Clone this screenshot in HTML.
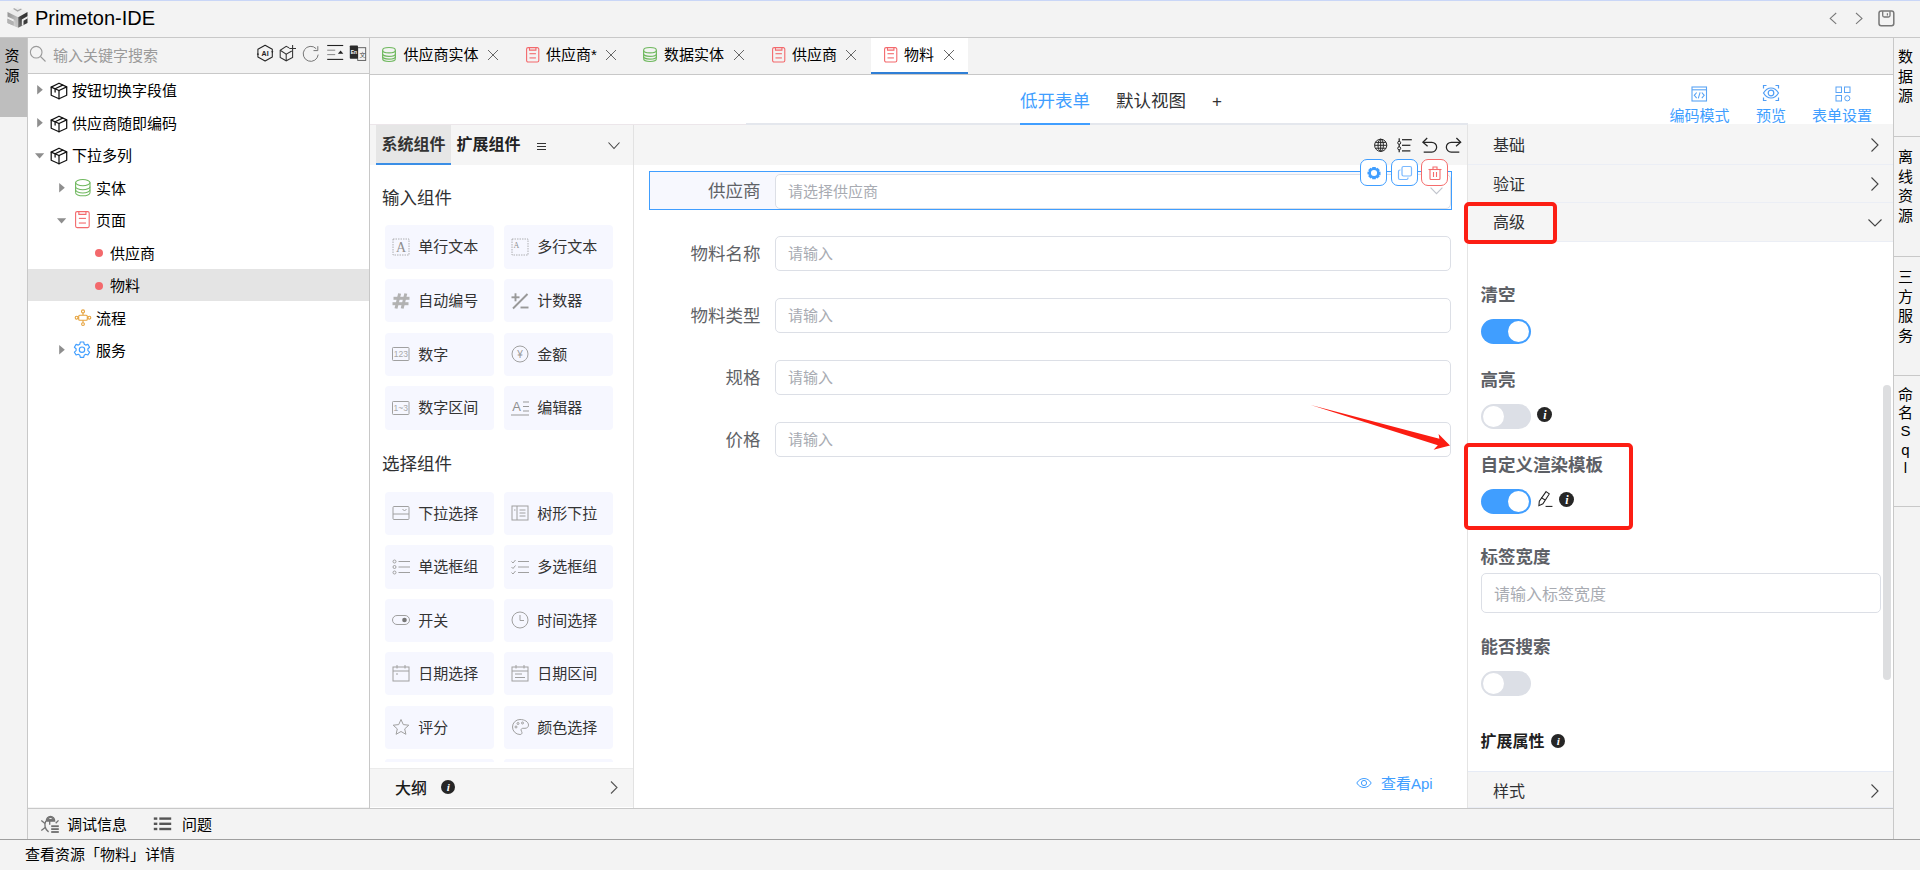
<!DOCTYPE html>
<html lang="zh-CN"><head><meta charset="utf-8"><title>Primeton-IDE</title>
<style>
*{box-sizing:border-box;margin:0;padding:0}
html,body{width:1920px;height:870px;overflow:hidden;background:#f3f3f3}
body{position:relative;font-family:"Liberation Sans", "Noto Sans CJK SC", sans-serif;font-size:15px;color:#000;line-height:1}
.a{position:absolute}
.t{position:absolute;white-space:nowrap;line-height:20px;height:20px}
.ln{position:absolute;background:#c8c8c8}
svg{position:absolute;overflow:visible}
.t15{font-size:15px}
.t17{font-size:17.5px}
.b{font-weight:bold}
.blue{color:#409eff}
.ph{color:#a8abb2}
.lbl{color:#606266}
.inp{position:absolute;background:#fff;border:1px solid #dcdfe6;border-radius:5px}
.ci{position:absolute;background:#f6f7ff;border-radius:4px;width:109px;height:43px}
.ci .t{left:33.300px;top:11.700px;color:#333;font-size:15px}
.ch{position:absolute;left:1468px;width:425px;background:#f5f5f5;border-bottom:1px solid #ebeef5}
.ch .t{left:25px;font-size:16px;color:#303133}
.sw{position:absolute;width:50px;height:25px;border-radius:13px}
.sw i{position:absolute;top:2px;width:21px;height:21px;border-radius:50%;background:#fff}
.on{background:#409eff}.on i{left:27px}
.off{background:#dcdfe6}.off i{left:2px}
.red{position:absolute;border:4px solid #fc1e14;border-radius:5px}
.vt{position:absolute;left:1892px;width:27px;text-align:center;font-size:15px;line-height:19.5px;color:#000}
</style></head>
<body>
<div class="a" style="left:0;top:0;width:1920px;height:1px;background:#c9d6f7"></div>
<div class="ln" style="left:0;top:37px;width:1920px;height:1px"></div>
<svg style="left:7px;top:7px" width="21" height="21" viewBox="0 0 20 21">
<defs><linearGradient id="lgl" x1="0" y1="0" x2="1" y2="0.6"><stop offset="0" stop-color="#929292"/><stop offset="1" stop-color="#c4c4c4"/></linearGradient><linearGradient id="lgr" x1="0" y1="0.600" x2="1" y2="0"><stop offset="0" stop-color="#6a6a6a"/><stop offset="0.35" stop-color="#3e3e3e"/><stop offset="1" stop-color="#2e2e2e"/></linearGradient></defs>
<polygon points="10.100,0 20,5.060 10.620,10.370 0,5.060" fill="#ececec"/>
<polyline points="6.100,1.500 10.100,3.900 13.900,2" stroke="#a8a8a8" stroke-width="1.300" fill="none"/>
<polygon points="0,5.060 10.700,10.370 10.700,20.700 0,15.900" fill="url(#lgl)"/>
<polygon points="-0.300,9.500 6.400,12.600 6.400,14.700 -0.300,11.600" fill="#f0f0f0"/>
<polygon points="0,11.900 5.900,14.700 5.900,18.600 0,15.900" fill="#b2b2b2"/>
<polygon points="6.300,12.700 8,13.500 8,19.500 6.300,18.800" fill="#cdcdcd"/>
<polygon points="10.700,10.370 20,5.060 20,15.900 10.700,20.700" fill="url(#lgr)"/>
<polygon points="14.300,12.400 20.300,9 20.300,11.300 16,13.700 16,18 14.300,19" fill="#ededed"/>
</svg>
<div class="t" style="left:35px;top:5.500px;font-size:20px;line-height:24px;height:24px;color:#000">Primeton-IDE</div>
<svg style="left:1820px;top:4px" width="90" height="30" viewBox="1820 4 90 30" fill="none" stroke="#777" stroke-width="1.050">
<polyline points="1836.200,13 1830.200,18.400 1836.200,23.800"/>
<polyline points="1856,13 1862,18.400 1856,23.800"/>
<rect x="1879" y="11" width="14.800" height="14.800" rx="2.200" stroke-width="1.500"/>
<path d="M1882.700 11.200v4.300a1.500 1.500 0 0 0 1.500 1.500h4.300a1.500 1.500 0 0 0 1.500-1.500V11.200" stroke-width="1.300"/>
<line x1="1887.400" y1="13.300" x2="1887.400" y2="15.400" stroke-width="1.200"/>
</svg>
<div class="a" style="left:0;top:38px;width:27px;height:79px;background:#bebebe"></div>
<div class="ln" style="left:27px;top:38px;width:1px;height:802px"></div>
<div class="a" style="left:0;top:46px;width:24px;text-align:center;font-size:15px;line-height:20px">资<br>源</div>
<div class="a" style="left:28px;top:74px;width:341px;height:733px;background:#fff"></div>
<div class="ln" style="left:28px;top:73px;width:341px;height:1px"></div>
<div class="ln" style="left:369px;top:38px;width:1px;height:770px"></div>
<svg style="left:29px;top:45px" width="18" height="18" viewBox="0 0 18 18" fill="none" stroke="#9a9a9a" stroke-width="1.1"><circle cx="7.2" cy="7.2" r="5.8"/><line x1="11.5" y1="11.5" x2="16.5" y2="16.5"/></svg>
<div class="t t15" style="left:53px;top:46px;color:#9a9a9a">输入关键字搜索</div>
<svg style="left:250px;top:38px" width="124" height="36" viewBox="250 38 124 36" fill="none" stroke="#222" stroke-width="1.05">
<polygon points="265.1,45.2 272.3,49.2 272.3,57 265.1,61 257.9,57 257.9,49.2" stroke-linejoin="round"/>
<polygon points="271.2,51.2 273.4,51.2 272.3,53.2" fill="#222" stroke="none"/><polygon points="256.8,54.8 259,54.8 257.9,52.8" fill="#222" stroke="none"/>
<text x="265.1" y="55.6" font-size="7" font-weight="bold" text-anchor="middle" fill="#222" stroke="none" font-family="Liberation Sans, sans-serif">AI</text>
<g stroke="#333"><polyline points="289.2,47.9 286.2,46.4 280.2,50.2 280.2,57.4 286.2,60.8 292.6,57.4 292.6,45"/><polyline points="280.2,50.2 286.2,54.1 291.8,51"/><line x1="286.2" y1="54.1" x2="286.2" y2="60.8"/><line x1="289.3" y1="48.5" x2="296" y2="48.5"/></g>
<g stroke="#777" stroke-width="1"><path d="M318.2 54.6A7.500 7.500 0 1 1 316.2 48.7"/><polyline points="317.8,46.2 317.8,50.6 313.5,50.6"/></g>
<g><line x1="327.2" y1="45.5" x2="343.2" y2="45.5" stroke-width="1.1"/><line x1="327.2" y1="59.4" x2="343.2" y2="59.4" stroke-width="1.1"/><line x1="327.2" y1="50.200" x2="335.2" y2="50.200" stroke="#8a8a8a"/><line x1="327.2" y1="54.600" x2="335.2" y2="54.600" stroke="#8a8a8a"/><polygon points="340.6,50.400 343.3,53.700 337.900,53.700" fill="#222" stroke="none"/></g>
<g><rect x="357.700" y="47.700" width="8" height="12.700" stroke="#555" stroke-width="0.9" fill="#f3f3f3"/><text x="362.6" y="57.300" font-size="6" text-anchor="middle" fill="#444" stroke="none" font-family="Noto Sans CJK SC, sans-serif">文</text><rect x="349.800" y="45.400" width="8.200" height="13.300" rx="0.8" fill="#2b2b2b" stroke="none"/><text x="353.900" y="54.300" font-size="5" font-weight="bold" text-anchor="middle" fill="#fff" stroke="none" font-family="Liberation Sans, sans-serif">En</text></g>
</svg>
<div class="a" style="left:28px;top:269px;width:341px;height:32px;background:#e4e4e4"></div>
<svg style="left:37px;top:85.1px" width="6" height="9.4"><polygon points="0.2,0 5.8,4.7 0.2,9.4" fill="#8e8e8e"/></svg>
<svg style="left:50px;top:82.0px" width="18" height="18" viewBox="-9 -9 18 18" fill="none" stroke="#111" stroke-width="1.25" stroke-linejoin="round" stroke-linecap="round"><polygon points="0,-7.800 7.700,-4.100 7.700,4.300 0,7.800 -7.800,4.300 -7.800,-3.900"/><polyline points="-7.800,-3.900 0,-0.500 7.700,-4.100"/><line x1="0" y1="-0.500" x2="0" y2="7.800"/><polyline points="3.700,-5.900 -3.900,-2.300 -3.900,1"/></svg>
<div class="t " style="left:72px;top:81.0px;">按钮切换字段值</div>
<svg style="left:37px;top:117.6px" width="6" height="9.4"><polygon points="0.2,0 5.8,4.7 0.2,9.4" fill="#8e8e8e"/></svg>
<svg style="left:50px;top:114.5px" width="18" height="18" viewBox="-9 -9 18 18" fill="none" stroke="#111" stroke-width="1.25" stroke-linejoin="round" stroke-linecap="round"><polygon points="0,-7.800 7.700,-4.100 7.700,4.300 0,7.800 -7.800,4.300 -7.800,-3.900"/><polyline points="-7.800,-3.900 0,-0.500 7.700,-4.100"/><line x1="0" y1="-0.500" x2="0" y2="7.800"/><polyline points="3.700,-5.900 -3.900,-2.300 -3.900,1"/></svg>
<div class="t " style="left:72px;top:113.5px;">供应商随即编码</div>
<svg style="left:35.2px;top:152.9px" width="9.2" height="5.4"><polygon points="0,0.2 9.2,0.2 4.6,5.4" fill="#8e8e8e"/></svg>
<svg style="left:50px;top:147.0px" width="18" height="18" viewBox="-9 -9 18 18" fill="none" stroke="#111" stroke-width="1.25" stroke-linejoin="round" stroke-linecap="round"><polygon points="0,-7.800 7.700,-4.100 7.700,4.300 0,7.800 -7.800,4.300 -7.800,-3.900"/><polyline points="-7.800,-3.900 0,-0.500 7.700,-4.100"/><line x1="0" y1="-0.500" x2="0" y2="7.800"/><polyline points="3.700,-5.900 -3.900,-2.300 -3.900,1"/></svg>
<div class="t " style="left:72px;top:146.0px;">下拉多列</div>
<svg style="left:59.2px;top:183.0px" width="6" height="9.4"><polygon points="0.2,0 5.8,4.7 0.2,9.4" fill="#8e8e8e"/></svg>
<svg style="left:74.95px;top:178.85px" width="15.6" height="17.3" viewBox="-7.8 -8.65 15.6 17.3" fill="none" stroke="#6fb85e" stroke-width="1.1"><ellipse cx="0" cy="-5.04" rx="7.20" ry="3.11"/><line x1="-7.20" y1="-5.04" x2="-7.20" y2="5.04"/><line x1="7.20" y1="-5.04" x2="7.20" y2="5.04"/><path d="M-7.20 -1.01A7.20 3.11 0 0 0 7.20 -1.01"/><path d="M-7.20 2.22A7.20 3.11 0 0 0 7.20 2.22"/><path d="M-7.20 5.04A7.20 3.11 0 0 0 7.20 5.04"/></svg>
<div class="t " style="left:96px;top:178.5px;">实体</div>
<svg style="left:57.3px;top:217.9px" width="9.2" height="5.4"><polygon points="0,0.2 9.2,0.2 4.6,5.4" fill="#8e8e8e"/></svg>
<svg style="left:75.35px;top:211.0px" width="14.8" height="17.2" viewBox="-7.4 -8.6 14.8 17.2" fill="none" stroke="#f3696c" stroke-width="1.1"><rect x="-6.80" y="-8.00" width="13.60" height="16.00" rx="1.500"/><polyline points="-3.55,-8.00 -3.55,-5.25 3.55,-5.25 3.55,-8.00"/><line x1="-3.55" y1="-1.20" x2="3.55" y2="-1.20"/><line x1="-3.55" y1="3.44" x2="3.55" y2="3.44"/></svg>
<div class="t " style="left:96px;top:211.0px;">页面</div>
<div class="a" style="left:94.5px;top:249.3px;width:8px;height:8px;border-radius:50%;background:#f3696c"></div>
<div class="t " style="left:110px;top:243.5px;">供应商</div>
<div class="a" style="left:94.5px;top:281.8px;width:8px;height:8px;border-radius:50%;background:#f3696c"></div>
<div class="t " style="left:110px;top:276.0px;">物料</div>
<svg style="left:73.9px;top:309.2px" width="18" height="18" viewBox="-9 -9 18 18" fill="none" stroke="#e6a23c" stroke-width="1.1"><circle cx="0" cy="-6.6" r="1.5"/><line x1="0" y1="-5.100" x2="0" y2="-2.800"/><rect x="-4.300" y="-2.800" width="8.600" height="5" rx="1"/><circle cx="-6.400" cy="-0.300" r="1.400"/><circle cx="6.400" cy="-0.300" r="1.400"/><line x1="-5" y1="-0.300" x2="-4.300" y2="-0.300"/><line x1="5" y1="-0.300" x2="4.300" y2="-0.300"/><line x1="0" y1="2.200" x2="0" y2="4.700"/><circle cx="0" cy="6.100" r="1.400"/></svg>
<div class="t " style="left:96px;top:308.5px;">流程</div>
<svg style="left:59.2px;top:344.7px" width="6" height="9.4"><polygon points="0.2,0 5.8,4.7 0.2,9.4" fill="#8e8e8e"/></svg>
<svg style="left:73.4px;top:340.7px" width="18" height="18" viewBox="0 0 18 18" fill="none" stroke="#409eff" stroke-width="1.15" stroke-linejoin="round"><path d="M7.300 1h3.400l.5 2.200 1.500.9 2.200-.7 1.700 2.900-1.700 1.500v1.800l1.700 1.500-1.700 2.900-2.200-.7-1.500.9-.5 2.200H7.300l-.5-2.200-1.500-.9-2.200.7-1.700-2.900 1.700-1.500V7.800L1.400 6.300l1.700-2.900 2.200.7 1.500-.9z"/><circle cx="9" cy="8.700" r="2.700"/></svg>
<div class="t " style="left:96px;top:341.0px;">服务</div>
<div class="ln" style="left:370px;top:74px;width:1523px;height:1px"></div>
<div class="a" style="left:871px;top:38px;width:97px;height:36px;background:#fff"></div>
<div class="a" style="left:871px;top:72px;width:97px;height:2px;background:#2f7fd6"></div>
<svg style="left:382.4px;top:47.0px" width="14" height="15" viewBox="-7.0 -7.5 14 15" fill="none" stroke="#6fb85e" stroke-width="1.1"><ellipse cx="0" cy="-4.30" rx="6.40" ry="2.70"/><line x1="-6.40" y1="-4.30" x2="-6.40" y2="4.30"/><line x1="6.40" y1="-4.30" x2="6.40" y2="4.30"/><path d="M-6.40 -0.86A6.40 2.70 0 0 0 6.40 -0.86"/><path d="M-6.40 1.89A6.40 2.70 0 0 0 6.40 1.89"/><path d="M-6.40 4.30A6.40 2.70 0 0 0 6.40 4.30"/></svg>
<div class="t " style="left:403.5px;top:45px;">供应商实体</div>
<svg style="left:487.5px;top:49.5px" width="10" height="10" viewBox="0 0 10 10" stroke="#666" stroke-width="1"><line x1="0" y1="0" x2="10" y2="10"/><line x1="10" y1="0" x2="0" y2="10"/></svg>
<svg style="left:525.8px;top:46.7px" width="13.4" height="15.6" viewBox="-6.7 -7.8 13.4 15.6" fill="none" stroke="#f3696c" stroke-width="1.1"><rect x="-6.10" y="-7.20" width="12.20" height="14.40" rx="1.500"/><polyline points="-3.22,-7.20 -3.22,-4.70 3.22,-4.70 3.22,-7.20"/><line x1="-3.22" y1="-1.09" x2="3.22" y2="-1.09"/><line x1="-3.22" y1="3.12" x2="3.22" y2="3.12"/></svg>
<div class="t " style="left:546px;top:45px;">供应商*</div>
<svg style="left:606px;top:49.5px" width="10" height="10" viewBox="0 0 10 10" stroke="#666" stroke-width="1"><line x1="0" y1="0" x2="10" y2="10"/><line x1="10" y1="0" x2="0" y2="10"/></svg>
<svg style="left:643.3px;top:47.0px" width="14" height="15" viewBox="-7.0 -7.5 14 15" fill="none" stroke="#6fb85e" stroke-width="1.1"><ellipse cx="0" cy="-4.30" rx="6.40" ry="2.70"/><line x1="-6.40" y1="-4.30" x2="-6.40" y2="4.30"/><line x1="6.40" y1="-4.30" x2="6.40" y2="4.30"/><path d="M-6.40 -0.86A6.40 2.70 0 0 0 6.40 -0.86"/><path d="M-6.40 1.89A6.40 2.70 0 0 0 6.40 1.89"/><path d="M-6.40 4.30A6.40 2.70 0 0 0 6.40 4.30"/></svg>
<div class="t " style="left:664px;top:45px;">数据实体</div>
<svg style="left:733.5px;top:49.5px" width="10" height="10" viewBox="0 0 10 10" stroke="#666" stroke-width="1"><line x1="0" y1="0" x2="10" y2="10"/><line x1="10" y1="0" x2="0" y2="10"/></svg>
<svg style="left:771.8px;top:46.7px" width="13.4" height="15.6" viewBox="-6.7 -7.8 13.4 15.6" fill="none" stroke="#f3696c" stroke-width="1.1"><rect x="-6.10" y="-7.20" width="12.20" height="14.40" rx="1.500"/><polyline points="-3.22,-7.20 -3.22,-4.70 3.22,-4.70 3.22,-7.20"/><line x1="-3.22" y1="-1.09" x2="3.22" y2="-1.09"/><line x1="-3.22" y1="3.12" x2="3.22" y2="3.12"/></svg>
<div class="t " style="left:792px;top:45px;">供应商</div>
<svg style="left:846px;top:49.5px" width="10" height="10" viewBox="0 0 10 10" stroke="#666" stroke-width="1"><line x1="0" y1="0" x2="10" y2="10"/><line x1="10" y1="0" x2="0" y2="10"/></svg>
<svg style="left:883.8px;top:46.7px" width="13.4" height="15.6" viewBox="-6.7 -7.8 13.4 15.6" fill="none" stroke="#f3696c" stroke-width="1.1"><rect x="-6.10" y="-7.20" width="12.20" height="14.40" rx="1.500"/><polyline points="-3.22,-7.20 -3.22,-4.70 3.22,-4.70 3.22,-7.20"/><line x1="-3.22" y1="-1.09" x2="3.22" y2="-1.09"/><line x1="-3.22" y1="3.12" x2="3.22" y2="3.12"/></svg>
<div class="t " style="left:904px;top:45px;">物料</div>
<svg style="left:944px;top:49.5px" width="10" height="10" viewBox="0 0 10 10" stroke="#666" stroke-width="1"><line x1="0" y1="0" x2="10" y2="10"/><line x1="10" y1="0" x2="0" y2="10"/></svg>
<div class="a" style="left:370px;top:75px;width:1523px;height:50px;background:#fff"></div>
<div class="a" style="left:370px;top:124px;width:376px;height:1px;background:#ece6ea"></div>
<div class="a" style="left:746px;top:123px;width:722px;height:2px;background:#e4e7ed"></div>
<div class="t t17 blue" style="left:1020px;top:91px;">低开表单</div>
<div class="a" style="left:1020px;top:123px;width:70px;height:2px;background:#409eff"></div>
<div class="t t17" style="left:1116px;top:91px;color:#303133">默认视图</div>
<div class="t " style="left:1212px;top:91.8px;font-size:17px;color:#303133">+</div>
<svg style="left:1690.400px;top:84.700px" width="18" height="18" viewBox="0 0 18 18" fill="none" stroke="#5aa4f5" stroke-width="1.100"><rect x="2" y="2" width="14.500" height="14"/><line x1="2" y1="4.800" x2="16.500" y2="4.800"/><polyline points="6.700,7.500 4.300,10.300 6.700,13.100"/><polyline points="11.800,7.500 14.200,10.300 11.800,13.100"/><line x1="10.100" y1="7.300" x2="8.300" y2="13.300"/></svg>
<svg style="left:1762px;top:84.300px" width="18" height="18" viewBox="0 0 18 18" fill="none" stroke="#4f9df5" stroke-width="1.200"><path d="M1.5 9c2-3.3 4.6-5 7.5-5s5.5 1.7 7.5 5c-2 3.3-4.6 5-7.5 5s-5.500-1.700-7.500-5z"/><circle cx="9" cy="9" r="2.8"/><polyline points="1.500,4.500 1.500,1.500 4.500,1.500"/><polyline points="13.500,1.500 16.500,1.500 16.500,4.500"/><polyline points="1.500,13.500 1.500,16.500 4.500,16.500"/><polyline points="13.500,16.500 16.500,16.500 16.500,13.500"/></svg>
<svg style="left:1834.800px;top:85.800px" width="17" height="17" viewBox="0 0 17 17" fill="none" stroke="#5aa4f5" stroke-width="1"><rect x="1" y="1" width="5.500" height="5.500"/><rect x="9.500" y="1" width="5.500" height="5.500"/><rect x="1" y="9.500" width="5.500" height="5.500"/><circle cx="12.300" cy="12.300" r="2.600"/></svg>
<div class="t t15 blue" style="left:1669.5px;top:105.5px;">编码模式</div>
<div class="t t15 blue" style="left:1756px;top:105.5px;">预览</div>
<div class="t t15 blue" style="left:1812px;top:105.5px;">表单设置</div>
<div class="a" style="left:370px;top:125px;width:263px;height:683px;background:#fff"></div>
<div class="a" style="left:370px;top:125px;width:263px;height:40px;background:#f5f5f5"></div>
<div class="a" style="left:376px;top:125px;width:75px;height:40px;background:#e6e6e6"></div>
<div class="a" style="left:376px;top:162.5px;width:75px;height:2.5px;background:#3a8ee6"></div>
<div class="a" style="left:633px;top:125px;width:1px;height:683px;background:#e2e2e2"></div>
<div class="t b" style="left:381.5px;top:134.7px;font-size:16px;color:#333">系统组件</div>
<div class="t b" style="left:456.5px;top:134.7px;font-size:16px;color:#222">扩展组件</div>
<svg style="left:537px;top:143px" width="9" height="7" stroke="#333" stroke-width="1"><line x1="0" y1="0.500" x2="9" y2="0.500"/><line x1="0" y1="3.500" x2="9" y2="3.500"/><line x1="0" y1="6.500" x2="9" y2="6.500"/></svg>
<svg style="left:608px;top:142px" width="12" height="8" fill="none" stroke="#444" stroke-width="1.100"><polyline points="0.500,0.500 6,6.500 11.500,0.500"/></svg>
<div class="t t17" style="left:382px;top:187.7px;color:#303133">输入组件</div>
<div class="t t17" style="left:382px;top:453.7px;color:#303133">选择组件</div>
<div class="ci" style="left:385px;top:225px;height:43.6px"><svg style="left:7px;top:12.5px" width="18" height="18" viewBox="0 0 18 18"><rect x="1" y="1" width="16" height="16" stroke-dasharray="1.500 1" stroke="#a0a0a0" fill="none" stroke-width="0.800"/><text x="9" y="14" font-size="14" text-anchor="middle" fill="#8f8f8f" font-family="Liberation Serif, serif">A</text></svg><div class="t" style="top:12.0px">单行文本</div></div>
<div class="ci" style="left:504px;top:225px;height:43.6px"><svg style="left:7px;top:12.5px" width="18" height="18" viewBox="0 0 18 18"><rect x="1" y="1" width="16" height="16" stroke-dasharray="1.500 1" stroke="#a0a0a0" fill="none" stroke-width="0.800"/><text x="5.500" y="10" font-size="8" text-anchor="middle" fill="#8f8f8f" font-family="Liberation Serif, serif">A</text></svg><div class="t" style="top:12.0px">多行文本</div></div>
<div class="ci" style="left:385px;top:279.4px;height:43.0px"><svg style="left:7px;top:12.2px" width="18" height="18" viewBox="0 0 18 18"><g stroke="#b2b2b2" stroke-width="3" fill="none"><line x1="7.600" y1="1.500" x2="4" y2="16.500"/><line x1="13.800" y1="1.500" x2="10.200" y2="16.500"/><line x1="1.500" y1="6.300" x2="17.500" y2="6.300"/><line x1="0.500" y1="11.700" x2="16.500" y2="11.700"/></g></svg><div class="t" style="top:11.7px">自动编号</div></div>
<div class="ci" style="left:504px;top:279.4px;height:43.0px"><svg style="left:7px;top:12.2px" width="18" height="18" viewBox="0 0 18 18"><g stroke="#999" stroke-width="1.900" fill="none"><line x1="0.500" y1="5.300" x2="8.500" y2="5.300"/><line x1="4.500" y1="1.300" x2="4.500" y2="9.300"/><line x1="2" y1="16.500" x2="16.500" y2="2"/><line x1="9.500" y1="15.500" x2="17.500" y2="15.500"/></g></svg><div class="t" style="top:11.7px">计数器</div></div>
<div class="ci" style="left:385px;top:333.1px;height:42.9px"><svg style="left:7px;top:12.1px" width="18" height="18" viewBox="0 0 18 18"><rect x="0.500" y="2.500" width="16.500" height="13" rx="0.800" stroke="#a0a0a0" fill="none" stroke-width="1"/><text x="8.800" y="12" font-size="8.500" text-anchor="middle" fill="#a8a8a8" font-family="Liberation Sans, sans-serif">123</text></svg><div class="t" style="top:11.6px">数字</div></div>
<div class="ci" style="left:504px;top:333.1px;height:42.9px"><svg style="left:7px;top:12.1px" width="18" height="18" viewBox="0 0 18 18"><circle cx="9" cy="9" r="8" stroke="#a0a0a0" fill="none" stroke-width="1"/><text x="9" y="12.800" font-size="10" text-anchor="middle" fill="#999" font-family="Liberation Sans, sans-serif">¥</text></svg><div class="t" style="top:11.6px">金额</div></div>
<div class="ci" style="left:385px;top:386px;height:44.0px"><svg style="left:7px;top:12.7px" width="18" height="18" viewBox="0 0 18 18"><rect x="0.500" y="2.500" width="16.500" height="13" rx="0.800" stroke="#a0a0a0" fill="none" stroke-width="1"/><text x="8.800" y="12" font-size="8.500" text-anchor="middle" fill="#a8a8a8" font-family="Liberation Sans, sans-serif">1~3</text></svg><div class="t" style="top:12.2px">数字区间</div></div>
<div class="ci" style="left:504px;top:386px;height:44.0px"><svg style="left:7px;top:12.7px" width="18" height="18" viewBox="0 0 18 18"><text x="5.500" y="12" font-size="13" text-anchor="middle" fill="#8f8f8f" font-family="Liberation Sans, sans-serif">A</text><g stroke="#999" stroke-width="1"><line x1="12" y1="3" x2="18" y2="3"/><line x1="12" y1="7.500" x2="18" y2="7.500"/><line x1="12" y1="12" x2="18" y2="12"/><line x1="0" y1="16" x2="18" y2="16"/></g></svg><div class="t" style="top:12.2px">编辑器</div></div>
<div class="ci" style="left:385px;top:492.1px;height:42.7px"><svg style="left:7px;top:12.0px" width="18" height="18" viewBox="0 0 18 18"><g stroke="#a0a0a0" fill="none" stroke-width="1"><rect x="1" y="2.500" width="16" height="13" rx="1"/><line x1="1" y1="10" x2="17" y2="10"/><polyline points="10.500,5 12.500,7 14.500,5"/></g></svg><div class="t" style="top:11.5px">下拉选择</div></div>
<div class="ci" style="left:504px;top:492.1px;height:42.7px"><svg style="left:7px;top:12.0px" width="18" height="18" viewBox="0 0 18 18"><g stroke="#a0a0a0" fill="none" stroke-width="1"><rect x="1" y="2" width="16" height="14"/><line x1="6" y1="2" x2="6" y2="16"/><line x1="8.500" y1="6" x2="14.500" y2="6"/><line x1="8.500" y1="9" x2="14.500" y2="9"/><line x1="8.500" y1="12" x2="14.500" y2="12"/><line x1="3" y1="6" x2="4.500" y2="6"/></g></svg><div class="t" style="top:11.5px">树形下拉</div></div>
<div class="ci" style="left:385px;top:545.2px;height:43.5px"><svg style="left:7px;top:12.4px" width="18" height="18" viewBox="0 0 18 18"><g stroke="#a0a0a0" fill="none" stroke-width="1"><circle cx="2.500" cy="3.500" r="1.500"/><circle cx="2.500" cy="9" r="1.500"/><circle cx="2.500" cy="14.500" r="1.500"/><line x1="6.500" y1="3.500" x2="18" y2="3.500"/><line x1="6.500" y1="9" x2="18" y2="9"/><line x1="6.500" y1="14.500" x2="18" y2="14.500"/></g></svg><div class="t" style="top:11.9px">单选框组</div></div>
<div class="ci" style="left:504px;top:545.2px;height:43.5px"><svg style="left:7px;top:12.4px" width="18" height="18" viewBox="0 0 18 18"><g stroke="#a0a0a0" fill="none" stroke-width="1"><polyline points="0.500,3.500 2,5 4.500,2"/><polyline points="0.500,9 2,10.500 4.500,7.500"/><polyline points="0.500,14.500 2,16 4.500,13"/><line x1="7" y1="3.500" x2="18" y2="3.500"/><line x1="7" y1="9" x2="18" y2="9"/><line x1="7" y1="14.500" x2="18" y2="14.500"/></g></svg><div class="t" style="top:11.9px">多选框组</div></div>
<div class="ci" style="left:385px;top:599.3px;height:42.5px"><svg style="left:7px;top:11.9px" width="18" height="18" viewBox="0 0 18 18"><rect x="0.500" y="4.500" width="17" height="9" rx="4.500" stroke="#a0a0a0" fill="none" stroke-width="1"/><circle cx="12.500" cy="9" r="2.300" fill="#777"/></svg><div class="t" style="top:11.4px">开关</div></div>
<div class="ci" style="left:504px;top:599.3px;height:42.5px"><svg style="left:7px;top:11.9px" width="18" height="18" viewBox="0 0 18 18"><g stroke="#a0a0a0" fill="none" stroke-width="1"><circle cx="9" cy="9" r="8"/><polyline points="9,4 9,9.500 13,9.500"/></g></svg><div class="t" style="top:11.4px">时间选择</div></div>
<div class="ci" style="left:385px;top:652px;height:43.4px"><svg style="left:7px;top:12.4px" width="18" height="18" viewBox="0 0 18 18"><g stroke="#a0a0a0" fill="none" stroke-width="1"><rect x="1" y="3" width="16" height="14"/><line x1="1" y1="7" x2="17" y2="7"/><line x1="5" y1="1" x2="5" y2="4.500"/><line x1="13" y1="1" x2="13" y2="4.500"/><line x1="4" y1="10" x2="6" y2="10"/></g></svg><div class="t" style="top:11.9px">日期选择</div></div>
<div class="ci" style="left:504px;top:652px;height:43.4px"><svg style="left:7px;top:12.4px" width="18" height="18" viewBox="0 0 18 18"><g stroke="#a0a0a0" fill="none" stroke-width="1"><rect x="1" y="3" width="16" height="14"/><line x1="1" y1="7" x2="17" y2="7"/><line x1="5" y1="1" x2="5" y2="4.500"/><line x1="13" y1="1" x2="13" y2="4.500"/><line x1="4" y1="10" x2="11" y2="10"/><line x1="4" y1="13.500" x2="14" y2="13.500"/></g></svg><div class="t" style="top:11.9px">日期区间</div></div>
<div class="ci" style="left:385px;top:706px;height:42.6px"><svg style="left:7px;top:12.0px" width="18" height="18" viewBox="0 0 18 18"><polygon points="9,1.500 11.300,6.600 16.800,7.200 12.700,10.900 13.900,16.300 9,13.500 4.100,16.300 5.300,10.900 1.200,7.200 6.700,6.600" stroke="#a0a0a0" fill="none" stroke-width="1" stroke-linejoin="round"/></svg><div class="t" style="top:11.5px">评分</div></div>
<div class="ci" style="left:504px;top:706px;height:42.6px"><svg style="left:7px;top:12.0px" width="18" height="18" viewBox="0 0 18 18"><g stroke="#a0a0a0" fill="none" stroke-width="1"><path d="M9 1.500a7.500 7.500 0 1 0 0 15c1.400 0 2-.800 2-1.800 0-1.300-1-1.600-1-2.700 0-1 .800-1.700 1.900-1.700h2.100c2 0 3.500-1.200 3.500-3.200C17.500 3.800 13.600 1.500 9 1.500z"/><circle cx="5" cy="9" r="1"/><circle cx="7" cy="5.500" r="1"/><circle cx="11.500" cy="5" r="1"/></g></svg><div class="t" style="top:11.5px">颜色选择</div></div>
<div class="ci" style="left:385px;top:759.300px;height:2.600px;border-radius:4px 4px 0 0"></div><div class="ci" style="left:504px;top:759.300px;height:2.600px;border-radius:4px 4px 0 0"></div>
<div class="a" style="left:370px;top:768px;width:263px;height:39px;background:#f5f5f5;border-top:1px solid #ebebeb"></div>
<div class="t " style="left:395px;top:779px;font-size:16px;color:#1a1a1a;font-weight:500">大纲</div>
<svg style="left:441px;top:780.1px" width="14" height="14" viewBox="0 0 15 15"><circle cx="7.500" cy="7.500" r="7.500" fill="#262626"/><text x="7.800" y="12" font-size="12" font-style="italic" font-weight="bold" text-anchor="middle" fill="#fff" font-family="Liberation Serif, serif">i</text></svg>
<svg style="left:610px;top:781px" width="8" height="13" fill="none" stroke="#555" stroke-width="1.100"><polyline points="1,0.500 7,6.500 1,12.500"/></svg>
<div class="a" style="left:634px;top:125px;width:834px;height:683px;background:#fff"></div>
<div class="a" style="left:634px;top:125px;width:834px;height:40px;background:#f5f5f5"></div>
<svg style="left:1370px;top:134px" width="96" height="24" viewBox="1370 134 96 24" fill="none" stroke="#262626" stroke-width="1.25">
<g stroke-width="1"><circle cx="1380.700" cy="145.300" r="6.100"/><ellipse cx="1380.700" cy="145.300" rx="2.700" ry="6.100"/><line x1="1380.700" y1="139.200" x2="1380.700" y2="151.400"/><line x1="1374.600" y1="145.300" x2="1386.800" y2="145.300"/><line x1="1375.500" y1="142.400" x2="1385.900" y2="142.400"/><line x1="1375.500" y1="148.200" x2="1385.900" y2="148.200"/></g>
<g><line x1="1399.200" y1="138.300" x2="1399.200" y2="152.300"/><circle cx="1399.200" cy="142.800" r="1.500" fill="#f5f5f5" stroke-width="1"/><circle cx="1399.200" cy="148.300" r="1.500" fill="#f5f5f5" stroke-width="1"/><line x1="1402" y1="139.700" x2="1411.800" y2="139.700"/><line x1="1402" y1="145.300" x2="1410.400" y2="145.300"/><line x1="1402" y1="150.900" x2="1410.400" y2="150.900"/></g>
<g><path d="M1423.700 152H1431.800a4.850 4.850 0 0 0 0-9.700H1423.200"/><polyline points="1427.200,138 1422.900,142.300 1427.600,146.300"/></g>
<g><path d="M1459.300 152H1451.200a4.850 4.850 0 0 1 0-9.700H1460.400"/><polyline points="1456.400,138 1460.700,142.300 1456,146.300"/></g>
</svg>
<div class="a" style="left:649px;top:171px;width:803px;height:39px;background:#f7f8fe;border:1px solid #409eff"></div>
<div class="t t17 lbl" style="right:1159.5px;top:181.3px;">供应商</div>
<div class="inp" style="left:775px;top:173.5px;width:676px;height:35px"></div>
<div class="t t15 ph" style="left:788px;top:181.9px;">请选择供应商</div>
<div class="t t17 lbl" style="right:1159.5px;top:244.3px;">物料名称</div>
<div class="inp" style="left:775px;top:236.0px;width:676px;height:35px"></div>
<div class="t t15 ph" style="left:788px;top:244.4px;">请输入</div>
<div class="t t17 lbl" style="right:1159.5px;top:306.3px;">物料类型</div>
<div class="inp" style="left:775px;top:298.0px;width:676px;height:35px"></div>
<div class="t t15 ph" style="left:788px;top:306.4px;">请输入</div>
<div class="t t17 lbl" style="right:1159.5px;top:368.3px;">规格</div>
<div class="inp" style="left:775px;top:360.0px;width:676px;height:35px"></div>
<div class="t t15 ph" style="left:788px;top:368.4px;">请输入</div>
<div class="t t17 lbl" style="right:1159.5px;top:430.3px;">价格</div>
<div class="inp" style="left:775px;top:422.0px;width:676px;height:35px"></div>
<div class="t t15 ph" style="left:788px;top:430.4px;">请输入</div>
<svg style="left:1429.500px;top:186.800px" width="13" height="8" fill="none" stroke="#c0c4cc" stroke-width="1.100"><polyline points="0.600,0.600 6.500,6.700 12.400,0.600"/></svg>
<div class="a" style="left:1360px;top:159px;width:27px;height:27px;border:1px solid #409eff;border-radius:7px;background:#fff"><svg style="left:4.500px;top:4.500px" width="16" height="16" viewBox="0 0 16 16"><g transform="translate(8 8) scale(0.930) translate(-8 -8)"><path d="M6.200 1.500h3.600l.4 1.700 1.500-.9 2.500 2.500-.9 1.500 1.700.4v3.600l-1.700-.4.9 1.500-2.500 2.500-1.500-.9-.4 1.700H6.200l-.4-1.700-1.500.9-2.500-2.500.9-1.500L1 9.300V6.700l1.700-.4-.9-1.500 2.500-2.500 1.500.9z" fill="#409eff"/><circle cx="8" cy="8" r="3.300" fill="#fff"/></g></svg></div>
<div class="a" style="left:1391px;top:159px;width:27px;height:27px;border:1px solid #409eff;border-radius:7px;background:#fff"><svg style="left:4.500px;top:4.500px" width="16" height="16" viewBox="0 0 16 16"><g fill="none" stroke="#79b8ff" stroke-width="1.200"><rect x="5" y="1.500" width="9.500" height="9.500" rx="1.500"/><path d="M3.500 5H3a1.500 1.500 0 0 0-1.500 1.500V13A1.500 1.500 0 0 0 3 14.500h6.500A1.500 1.500 0 0 0 11 13v-.5"/></g></svg></div>
<div class="a" style="left:1421.3px;top:159px;width:27px;height:27px;border:1px solid #f56c6c;border-radius:7px;background:#fff"><svg style="left:4.500px;top:4.500px" width="16" height="16" viewBox="0 0 16 16"><g fill="none" stroke="#f56c6c" stroke-width="1.100"><path d="M3 4.500h10v9a1 1 0 0 1-1 1H4a1 1 0 0 1-1-1z"/><line x1="1.500" y1="4.500" x2="14.500" y2="4.500"/><path d="M6 4.500V2h4v2.500"/><line x1="6.500" y1="7" x2="6.500" y2="12"/><line x1="9.500" y1="7" x2="9.500" y2="12"/></g></svg></div>
<svg style="left:1300px;top:395px" width="160" height="60" viewBox="1300 395 160 60"><polygon points="1310.8,405 1439.4,438.7 1438.6,433.9 1450,445.5 1433.6,449.8 1437.8,445.3" fill="#fb1d12"/></svg>
<svg style="left:1356px;top:777px" width="16" height="12" viewBox="0 0 16 12" fill="none" stroke="#409eff" stroke-width="1"><path d="M0.800 6C2.600 3 5.100 1.500 8 1.500S13.400 3 15.200 6C13.400 9 10.900 10.500 8 10.500S2.600 9 .8 6z"/><circle cx="8" cy="6" r="2.600"/></svg>
<div class="t t15 blue" style="left:1381px;top:773.5px;">查看Api</div>
<div class="a" style="left:1468px;top:124px;width:425px;height:684px;background:#fff"></div>
<div class="a" style="left:1467px;top:125px;width:1px;height:683px;background:#e4e4e4"></div>
<div class="ch" style="top:124px;height:40.5px"><div class="t" style="top:12.099999999999994px">基础</div></div>
<svg style="left:1871px;top:138.3px" width="8" height="14" fill="none" stroke="#444" stroke-width="1.100"><polyline points="0.500,0.500 7,7 0.500,13.500"/></svg>
<div class="ch" style="top:164.5px;height:38.5px"><div class="t" style="top:10.900000000000006px">验证</div></div>
<svg style="left:1871px;top:176.5px" width="8" height="14" fill="none" stroke="#444" stroke-width="1.100"><polyline points="0.500,0.500 7,7 0.500,13.500"/></svg>
<div class="ch" style="top:203px;height:38.5px"><div class="t" style="top:10.300000000000011px">高级</div></div>
<svg style="left:1868px;top:218.5px" width="14" height="8" fill="none" stroke="#444" stroke-width="1.100"><polyline points="0.500,0.500 7,7 13.500,0.500"/></svg>
<div class="ch" style="top:772px;height:36px"><div class="t" style="top:9.799999999999955px">样式</div></div>
<svg style="left:1871px;top:784.3px" width="8" height="14" fill="none" stroke="#444" stroke-width="1.100"><polyline points="0.500,0.500 7,7 0.500,13.500"/></svg>
<div class="a" style="left:1468px;top:771px;width:425px;height:1px;background:#e6ebf5"></div>
<div class="red" style="left:1464px;top:202px;width:93px;height:42px"></div>
<div class="red" style="left:1464px;top:443px;width:169px;height:86.500px"></div>
<div class="t b t17" style="left:1480.5px;top:285px;color:#5d6066">清空</div>
<div class="sw on" style="left:1481px;top:319px"><i></i></div>
<div class="t b t17" style="left:1480.5px;top:370px;color:#5d6066">高亮</div>
<div class="sw off" style="left:1481px;top:403.5px"><i></i></div>
<svg style="left:1536.5px;top:406.5px" width="15.0" height="15.0" viewBox="0 0 15 15"><circle cx="7.500" cy="7.500" r="7.500" fill="#262626"/><text x="7.800" y="12" font-size="12" font-style="italic" font-weight="bold" text-anchor="middle" fill="#fff" font-family="Liberation Serif, serif">i</text></svg>
<div class="t b t17" style="left:1480.5px;top:455px;color:#5d6066">自定义渲染模板</div>
<div class="sw on" style="left:1481px;top:488.5px"><i></i></div>
<svg style="left:1558.8px;top:491.5px" width="15.0" height="15.0" viewBox="0 0 15 15"><circle cx="7.500" cy="7.500" r="7.500" fill="#262626"/><text x="7.800" y="12" font-size="12" font-style="italic" font-weight="bold" text-anchor="middle" fill="#fff" font-family="Liberation Serif, serif">i</text></svg>
<svg style="left:1535.500px;top:490.300px" width="17" height="18" viewBox="0 0 16 17" fill="none" stroke="#222" stroke-width="1"><path d="M9.500 1.500l3 2.200-6 9.300-3.800 1.800.4-4.200z"/><line x1="5" y1="7.200" x2="8.500" y2="9.500"/><line x1="9" y1="15.500" x2="15.500" y2="15.500"/></svg>
<div class="t b t17" style="left:1480.5px;top:547px;color:#5d6066">标签宽度</div>
<div class="inp" style="left:1481px;top:573px;width:400px;height:39.5px"></div>
<div class="t ph" style="left:1494px;top:584.5px;font-size:16px">请输入标签宽度</div>
<div class="t b t17" style="left:1480.5px;top:637px;color:#5d6066">能否搜索</div>
<div class="sw off" style="left:1481px;top:671px"><i></i></div>
<div class="t b" style="left:1480.5px;top:731.6px;font-size:16px;color:#1f1f1f">扩展属性</div>
<svg style="left:1550.9px;top:734px" width="14" height="14" viewBox="0 0 15 15"><circle cx="7.500" cy="7.500" r="7.500" fill="#262626"/><text x="7.800" y="12" font-size="12" font-style="italic" font-weight="bold" text-anchor="middle" fill="#fff" font-family="Liberation Serif, serif">i</text></svg>
<div class="a" style="left:1883px;top:385px;width:8px;height:295px;border-radius:4px;background:#dddee0"></div>
<div class="ln" style="left:1893px;top:38px;width:1px;height:802px"></div>
<div class="vt" style="top:47px">数<br>据<br>源</div>
<div class="ln" style="left:1894px;top:136px;width:26px;height:1px"></div>
<div class="vt" style="top:147px">离<br>线<br>资<br>源</div>
<div class="ln" style="left:1894px;top:256px;width:26px;height:1px"></div>
<div class="vt" style="top:267px">三<br>方<br>服<br>务</div>
<div class="ln" style="left:1894px;top:375px;width:26px;height:1px"></div>
<div class="vt" style="top:386px;line-height:18.200px">命<br>名<br>S<br>q<br>l</div>
<div class="ln" style="left:1894px;top:506px;width:26px;height:1px"></div>
<div class="a" style="left:28px;top:809px;width:1865px;height:30px;background:#f3f3f3"></div>
<div class="ln" style="left:28px;top:808px;width:1865px;height:1px"></div>
<div class="ln" style="left:0;top:839px;width:1920px;height:1px;background:#9e9e9e"></div>
<svg style="left:38px;top:812px" width="24" height="24" viewBox="38 812 24 24" fill="none" stroke="#727272" stroke-width="1.300"><path d="M46.300 821a4.200 4.600 0 0 1 8.400 0z" fill="#777"/><ellipse cx="50.500" cy="818.500" rx="1.400" ry="0.600" fill="#f3f3f3" stroke="none"/><path d="M45.800 821C44.200 824.500 44.600 829.200 48.600 831.900"/><line x1="49.700" y1="821" x2="49.700" y2="824.800"/><line x1="41.300" y1="820.600" x2="45" y2="823.600"/><line x1="41.300" y1="830.600" x2="45.200" y2="827.400"/><line x1="58.500" y1="820.400" x2="55.700" y2="823.300"/><g stroke="#6e6e6e" stroke-width="1.800"><line x1="51.200" y1="826.200" x2="58.800" y2="826.200"/><line x1="51.200" y1="829.100" x2="58.800" y2="829.100"/><line x1="51.200" y1="832" x2="58.800" y2="832"/></g></svg>
<div class="t " style="left:67px;top:814.5px;">调试信息</div>
<svg style="left:153px;top:816px" width="19" height="16" viewBox="153 816 19 16" stroke="#555" stroke-width="2.400"><line x1="153.800" y1="818.600" x2="157.300" y2="818.600"/><line x1="159.300" y1="818.600" x2="171.200" y2="818.600"/><line x1="153.800" y1="823.800" x2="157.300" y2="823.800"/><line x1="159.300" y1="823.800" x2="171.200" y2="823.800"/><line x1="153.800" y1="829" x2="157.300" y2="829"/><line x1="159.300" y1="829" x2="171.200" y2="829"/></svg>
<div class="t " style="left:182px;top:814.5px;">问题</div>
<div class="t " style="left:25px;top:844.5px;">查看资源「物料」详情</div>
</body></html>
